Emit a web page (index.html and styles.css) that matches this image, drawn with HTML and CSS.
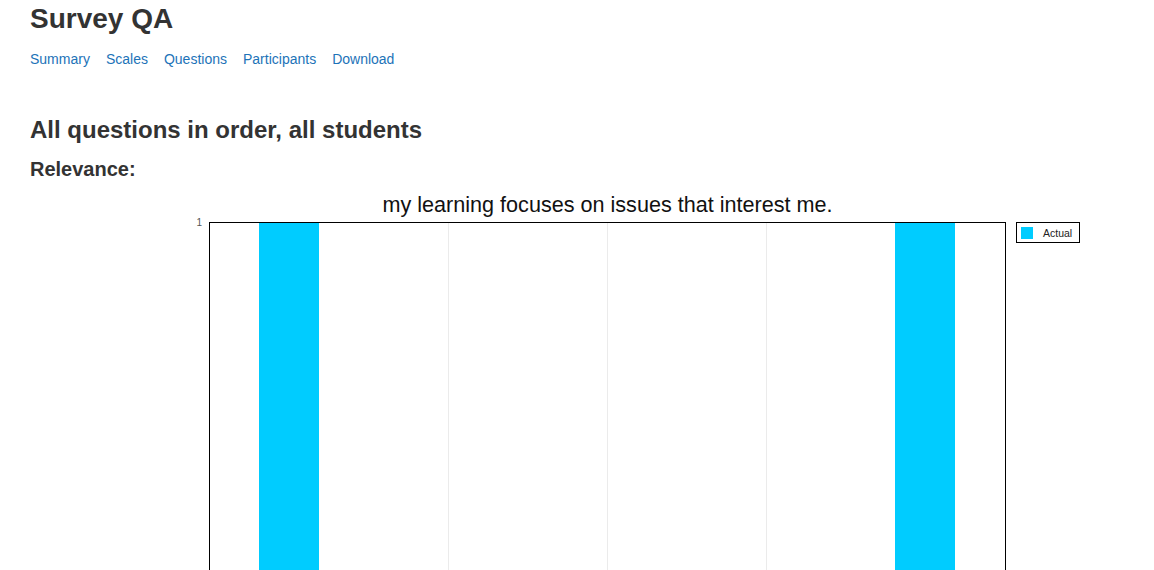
FILE: index.html
```html
<!DOCTYPE html>
<html lang="en">
<head>
<meta charset="utf-8">
<title>Survey QA</title>
<link rel="stylesheet" href="styles.css">
</head>
<body>
<div class="page">
  <h1 class="site-title">Survey QA</h1>
  <nav class="nav">
    <a href="#">Summary</a>
    <a href="#">Scales</a>
    <a href="#">Questions</a>
    <a href="#">Participants</a>
    <a href="#">Download</a>
  </nav>
  <h3 class="section-title">All questions in order, all students</h3>
  <h4 class="scale-title">Relevance:</h4>

  <div class="chart">
    <div class="chart-title">my learning focuses on issues that interest me.</div>
    <div class="y-axis"><span class="y-tick">1</span></div>
    <div class="plot">
      <div class="cat"><div class="bar" style="height:100%"></div></div>
      <div class="cat"><div class="gridline"></div></div>
      <div class="cat"><div class="gridline"></div></div>
      <div class="cat"><div class="gridline"></div></div>
      <div class="cat"><div class="bar" style="height:100%"></div></div>
    </div>
    <div class="legend-col">
      <div class="legend">
        <span class="swatch"></span>
        <span class="legend-label">Actual</span>
      </div>
    </div>
  </div>
</div>
</body>
</html>
```
FILE: styles.css
```css
html, body {
  margin: 0;
  padding: 0;
  background: #fff;
}
body {
  font-family: "Liberation Sans", Arial, Helvetica, sans-serif;
  color: #333;
}
.page {
  padding: 3px 0 40px 30px;
}
.site-title {
  margin: 0;
  font-size: 28px;
  line-height: 32px;
  font-weight: bold;
  color: #333;
}
.nav {
  display: flex;
  gap: 16px;
  margin-top: 14px;
  font-size: 14px;
  line-height: 20px;
}
.nav a {
  color: #1d73b8;
  text-decoration: none;
}
.section-title {
  margin: 47px 0 0 0;
  font-size: 24px;
  line-height: 28px;
  font-weight: bold;
}
.scale-title {
  margin: 13px 0 0 0;
  font-size: 20px;
  line-height: 24px;
  font-weight: bold;
}
.chart {
  margin-top: 12px;
  display: grid;
  grid-template-columns: 179px 797px auto;
  grid-template-rows: 24px 420px;
  row-gap: 5px;
}
.chart-title {
  grid-column: 2;
  grid-row: 1;
  text-align: center;
  font-size: 21.6px;
  line-height: 24px;
  color: #111;
  white-space: nowrap;
}
.y-axis {
  grid-column: 1;
  grid-row: 2;
  text-align: right;
  padding-right: 7px;
}
.y-tick {
  display: block;
  margin-top: -5px;
  font-size: 10px;
  line-height: 12px;
  color: #555;
}
.plot {
  grid-column: 2;
  grid-row: 2;
  border: 1px solid #000;
  display: grid;
  grid-template-columns: repeat(5, 1fr);
}
.cat {
  display: flex;
  justify-content: center;
  align-items: flex-end;
}
.gridline {
  width: 1px;
  height: 100%;
  background: #ebebeb;
}
.bar {
  width: 60px;
  margin-right: 1px;
  background: #00ccff;
}
.legend-col {
  grid-column: 3;
  grid-row: 2;
  padding-left: 10px;
}
.legend {
  display: inline-flex;
  align-items: center;
  border: 1px solid #000;
  padding: 4px 7px 3px 4px;
  gap: 10px;
}
.swatch {
  width: 12px;
  height: 12px;
  background: #00ccff;
}
.legend-label {
  font-size: 10.5px;
  line-height: 12px;
  color: #222;
}
```
